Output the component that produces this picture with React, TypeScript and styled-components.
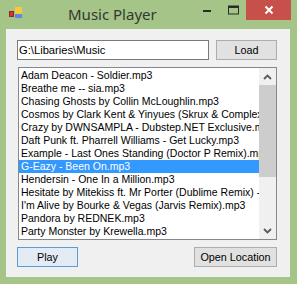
import React from "react";
import styled, { createGlobalStyle } from "styled-components";

const GlobalStyle = createGlobalStyle`
  html, body {
    margin: 0;
    padding: 0;
    background: #a5c487;
  }
`;

const songs = [
  "Adam Deacon - Soldier.mp3",
  "Breathe me -- sia.mp3",
  "Chasing Ghosts by Collin McLoughlin.mp3",
  "Cosmos by Clark Kent & Yinyues (Skrux & Complex Remix).mp3",
  "Crazy by DWNSAMPLA - Dubstep.NET Exclusive.mp3",
  "Daft Punk ft. Pharrell Williams - Get Lucky.mp3",
  "Example - Last Ones Standing (Doctor P Remix).mp3",
  "G-Eazy - Been On.mp3",
  "Hendersin - One In a Million.mp3",
  "Hesitate by Mitekiss ft. Mr Porter (Dublime Remix) - Free.mp3",
  "I'm Alive by Bourke & Vegas (Jarvis Remix).mp3",
  "Pandora by REDNEK.mp3",
  "Party Monster by Krewella.mp3",
];

const Window = styled.div`
  width: 297px;
  height: 284px;
  background: #a5c487;
  display: flex;
  flex-direction: column;
  overflow: hidden;
`;

const TitleBar = styled.div`
  height: 29px;
  display: flex;
  align-items: flex-start;
  flex-shrink: 0;
`;

const AppIcon = styled.svg`
  margin: 7px 0 0 9px;
  flex-shrink: 0;
`;

const Title = styled.div`
  margin: 5px 0 0 45px;
  font-family: "Noto Sans", "Open Sans", sans-serif;
  font-size: 15px;
  color: #333833;
  flex: 1;
  line-height: 18px;
`;

const Controls = styled.div`
  display: flex;
  align-items: flex-start;
  margin-right: 6px;
`;

const CtrlButton = styled.div<{ $close?: boolean }>`
  width: ${(p) => (p.$close ? "45px" : "26px")};
  height: 20px;
  display: flex;
  align-items: center;
  justify-content: center;
  background: ${(p) => (p.$close ? "#c7504b" : "transparent")};
`;

const Client = styled.div`
  margin: 0 7px 7px 6px;
  height: 248px;
  background: #f0f0f0;
  display: flex;
  flex-direction: column;
  padding: 11px 13px 0 11px;
  box-sizing: border-box;
  font-family: "Liberation Sans", Arial, sans-serif;
  font-size: 10.5px;
  color: #000;
`;

const Row = styled.div<{ $top?: number }>`
  display: flex;
  align-items: center;
  justify-content: space-between;
  margin-top: ${(p) => p.$top ?? 0}px;
`;

const PathBox = styled.div`
  width: 192px;
  height: 20px;
  box-sizing: border-box;
  border: 1px solid #7a7a7a;
  background: #fff;
  padding: 0 1px;
  display: flex;
  align-items: center;
  font-size: 11.2px;
`;

const Button = styled.div<{ $width: number; $focused?: boolean }>`
  width: ${(p) => p.$width}px;
  height: 20px;
  box-sizing: border-box;
  border: 1px solid ${(p) => (p.$focused ? "#5a9bd8" : "#adadad")};
  background: ${(p) => (p.$focused ? "#e3ecf5" : "#e1e1e1")};
  display: flex;
  align-items: center;
  justify-content: center;
  font-size: 10.8px;
`;

const ListBox = styled.div`
  margin: 7px 0 0 1px;
  height: 173px;
  box-sizing: border-box;
  border: 1px solid #828790;
  background: #fff;
  display: flex;
`;

const Items = styled.div`
  flex: 1;
  overflow: hidden;
  padding-top: 1px;
`;

const Item = styled.div<{ $selected?: boolean }>`
  height: 13px;
  line-height: 13px;
  padding-left: 2px;
  white-space: nowrap;
  overflow: hidden;
  background: ${(p) => (p.$selected ? "#3399ff" : "transparent")};
  color: ${(p) => (p.$selected ? "#fff" : "#000")};
`;

const ScrollBar = styled.div`
  width: 17px;
  background: #f0f0f0;
  display: flex;
  flex-direction: column;
  align-items: center;
`;

const Arrow = styled.div`
  height: 17px;
  width: 17px;
  display: flex;
  align-items: center;
  justify-content: center;
`;

const Thumb = styled.div`
  width: 17px;
  height: 92px;
  background: #cdcdcd;
`;

const Track = styled.div`
  flex: 1;
`;

const Chevron = ({ up }: { up?: boolean }) => (
  <svg width="9" height="6" viewBox="0 0 9 6">
    <path
      d={up ? "M1 5 L4.5 1.5 L8 5" : "M1 1 L4.5 4.5 L8 1"}
      fill="none"
      stroke="#5a5a5a"
      strokeWidth="1.8"
    />
  </svg>
);

export default function App() {
  const selected = 7;
  return (
    <>
      <GlobalStyle />
      <Window>
        <TitleBar>
          <AppIcon width="14" height="13" viewBox="0 0 14 13">
            <rect x="0.5" y="4.5" width="4" height="5" fill="#d8333a" stroke="#8a2a2a" strokeWidth="1" />
            <rect x="6" y="0" width="7" height="7" fill="#f5c93a" />
            <rect x="6" y="7" width="7" height="4" fill="#5a8be0" />
          </AppIcon>
          <Title>Music Player</Title>
          <Controls>
            <CtrlButton>
              <svg width="10" height="10" viewBox="0 0 10 10">
                <rect x="1" y="5" width="8" height="2" fill="#2b2b2b" />
              </svg>
            </CtrlButton>
            <CtrlButton>
              <svg width="11" height="10" viewBox="0 0 11 10">
                <rect x="0.5" y="1" width="10" height="8" fill="none" stroke="#2b2b2b" strokeWidth="1" />
                <rect x="0.5" y="1" width="10" height="2" fill="#2b2b2b" />
              </svg>
            </CtrlButton>
            <CtrlButton $close>
              <svg width="10" height="10" viewBox="0 0 10 10">
                <path d="M1.5 1.5 L8.5 8.5 M8.5 1.5 L1.5 8.5" stroke="#fff" strokeWidth="2" />
              </svg>
            </CtrlButton>
          </Controls>
        </TitleBar>
        <Client>
          <Row>
            <PathBox>G:\Libaries\Music</PathBox>
            <Button $width={61}>Load</Button>
          </Row>
          <ListBox>
            <Items>
              {songs.map((s, i) => (
                <Item key={s} $selected={i === selected}>
                  {s}
                </Item>
              ))}
            </Items>
            <ScrollBar>
              <Arrow>
                <Chevron up />
              </Arrow>
              <Thumb />
              <Track />
              <Arrow>
                <Chevron />
              </Arrow>
            </ScrollBar>
          </ListBox>
          <Row $top={7}>
            <Button $width={61} $focused>
              Play
            </Button>
            <Button $width={83}>Open Location</Button>
          </Row>
        </Client>
      </Window>
    </>
  );
}
